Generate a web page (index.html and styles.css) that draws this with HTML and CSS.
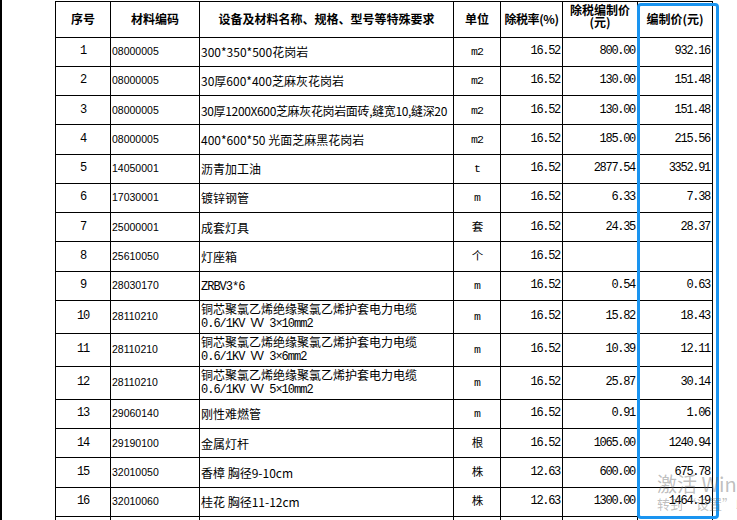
FILE: index.html
```html
<!DOCTYPE html>
<html lang="zh-CN">
<head>
<meta charset="utf-8">
<title>材料价格表</title>
<link rel="stylesheet" href="styles.css">
</head>
<body>
<div class="page">
  <table class="sheet">
    <colgroup>
      <col class="c-no"><col class="c-code"><col class="c-name"><col class="c-unit"><col class="c-rate"><col class="c-net"><col class="c-price">
    </colgroup>
    <thead>
      <tr class="head">
        <th>序号</th>
        <th>材料编码</th>
        <th>设备及材料名称、规格、型号等特殊要求</th>
        <th>单位</th>
        <th class="narrow">除税率(%)</th>
        <th class="two">除税编制价<br>(元)</th>
        <th>编制价(元)</th>
      </tr>
    </thead>
    <tbody>
      <tr><td class="no">1</td><td class="code">08000005</td><td class="name">300*350*500花岗岩</td><td class="unit">m2</td><td class="num">16.52</td><td class="num">800.00</td><td class="num">932.16</td></tr>
      <tr><td class="no">2</td><td class="code">08000005</td><td class="name">30厚600*400芝麻灰花岗岩</td><td class="unit">m2</td><td class="num">16.52</td><td class="num">130.00</td><td class="num">151.48</td></tr>
      <tr><td class="no">3</td><td class="code">08000005</td><td class="name tight">30厚1200X600芝麻灰花岗岩面砖,缝宽10,缝深20</td><td class="unit">m2</td><td class="num">16.52</td><td class="num">130.00</td><td class="num">151.48</td></tr>
      <tr><td class="no">4</td><td class="code">08000005</td><td class="name">400*600*50 光面芝麻黑花岗岩</td><td class="unit">m2</td><td class="num">16.52</td><td class="num">185.00</td><td class="num">215.56</td></tr>
      <tr><td class="no">5</td><td class="code">14050001</td><td class="name">沥青加工油</td><td class="unit">t</td><td class="num">16.52</td><td class="num">2877.54</td><td class="num">3352.91</td></tr>
      <tr><td class="no">6</td><td class="code">17030001</td><td class="name">镀锌钢管</td><td class="unit">m</td><td class="num">16.52</td><td class="num">6.33</td><td class="num">7.38</td></tr>
      <tr><td class="no">7</td><td class="code">25000001</td><td class="name">成套灯具</td><td class="unit">套</td><td class="num">16.52</td><td class="num">24.35</td><td class="num">28.37</td></tr>
      <tr><td class="no">8</td><td class="code">25610050</td><td class="name">灯座箱</td><td class="unit">个</td><td class="num">16.52</td><td class="num"></td><td class="num"></td></tr>
      <tr><td class="no">9</td><td class="code">28030170</td><td class="name"><span class="mono">ZRBV3*6</span></td><td class="unit">m</td><td class="num">16.52</td><td class="num">0.54</td><td class="num">0.63</td></tr>
      <tr class="tall"><td class="no">10</td><td class="code">28110210</td><td class="name">铜芯聚氯乙烯绝缘聚氯乙烯护套电力电缆<br><span class="mono">0.6/1KV VV 3×10mm2</span></td><td class="unit">m</td><td class="num">16.52</td><td class="num">15.82</td><td class="num">18.43</td></tr>
      <tr class="tall"><td class="no">11</td><td class="code">28110210</td><td class="name">铜芯聚氯乙烯绝缘聚氯乙烯护套电力电缆<br><span class="mono">0.6/1KV VV 3×6mm2</span></td><td class="unit">m</td><td class="num">16.52</td><td class="num">10.39</td><td class="num">12.11</td></tr>
      <tr class="tall"><td class="no">12</td><td class="code">28110210</td><td class="name">铜芯聚氯乙烯绝缘聚氯乙烯护套电力电缆<br><span class="mono">0.6/1KV VV 5×10mm2</span></td><td class="unit">m</td><td class="num">16.52</td><td class="num">25.87</td><td class="num">30.14</td></tr>
      <tr><td class="no">13</td><td class="code">29060140</td><td class="name">刚性难燃管</td><td class="unit">m</td><td class="num">16.52</td><td class="num">0.91</td><td class="num">1.06</td></tr>
      <tr><td class="no">14</td><td class="code">29190100</td><td class="name">金属灯杆</td><td class="unit">根</td><td class="num">16.52</td><td class="num">1065.00</td><td class="num">1240.94</td></tr>
      <tr><td class="no">15</td><td class="code">32010050</td><td class="name">香樟 胸径9-10cm</td><td class="unit">株</td><td class="num">12.63</td><td class="num">600.00</td><td class="num">675.78</td></tr>
      <tr><td class="no">16</td><td class="code">32010060</td><td class="name">桂花 胸径11-12cm</td><td class="unit">株</td><td class="num">12.63</td><td class="num">1300.00</td><td class="num">1464.19</td></tr>
      <tr><td class="no"></td><td class="code"></td><td class="name"></td><td class="unit"></td><td class="num"></td><td class="num"></td><td class="num"></td></tr>
    </tbody>
  </table>
  <div class="highlight"></div>
  <div class="watermark">
    <div class="wm-big">激活 Windows</div>
    <div class="wm-small">转到“设置”以激活 Windows。</div>
  </div>
</div>
</body>
</html>
```

FILE: styles.css
```css
html, body {
  margin: 0;
  padding: 0;
  background: #fff;
  overflow: hidden;
}

.page {
  position: relative;
  height: 520px;
  width: 737px;
  overflow: hidden;
  border-left: 2px solid #000;
  box-sizing: border-box;
}

.sheet {
  border-collapse: collapse;
  table-layout: fixed;
  width: 658px;
  margin: 1px 0 0 53px;
  font-family: "Noto Sans CJK SC", sans-serif;
  font-size: 12px;
  color: #000;
}

.c-no { width: 55px; }
.c-code { width: 89px; }
.c-name { width: 254px; }
.c-unit { width: 47px; }
.c-rate { width: 62px; }
.c-net { width: 75px; }
.c-price { width: 75px; }

.sheet th, .sheet td {
  border: 1px solid #000;
  padding: 0;
  overflow: hidden;
  white-space: nowrap;
}

.head th {
  height: 32.5px;
  font-size: 12px;
  font-weight: bold;
  text-align: center;
  vertical-align: middle;
  line-height: 14px;
}

.head th.narrow {
  letter-spacing: -0.4px;
}

.head th.two {
  vertical-align: top;
  line-height: 12px;
  padding-top: 2px;
}

.sheet tbody tr td {
  height: 28.25px;
  vertical-align: middle;
  line-height: 13px;
}

.sheet tbody tr.tall td {
  height: 32px;
}

.no {
  text-align: center;
  font-family: "Liberation Mono", monospace;
  font-size: 12px;
  letter-spacing: -1.2px;
}

.code {
  font-family: "Liberation Sans", sans-serif;
  font-size: 10.5px;
  padding-left: 1px !important;
}

.name {
  padding-left: 1px !important;
}

.name.tight {
  letter-spacing: -0.35px;
}

.mono {
  font-family: "Liberation Mono", "Noto Sans CJK SC", monospace;
  font-size: 12px;
  letter-spacing: -1px;
}

.unit {
  text-align: center;
  font-family: "Liberation Mono", "Noto Sans CJK SC", monospace;
  font-size: 11.5px;
  letter-spacing: -0.8px;
}

.num {
  text-align: right;
  padding-right: 2px !important;
  font-family: "Liberation Mono", monospace;
  font-size: 12px;
  letter-spacing: -1.3px;
}

.highlight {
  position: absolute;
  left: 635px;
  top: 3px;
  width: 82px;
  height: 516px;
  box-sizing: border-box;
  border: 3px solid #1a94f0;
  border-radius: 4px;
}

.watermark {
  position: absolute;
  left: 655px;
  top: 471px;
  color: rgba(100, 100, 100, 0.42);
  font-family: "Noto Sans CJK SC", "Liberation Sans", sans-serif;
  white-space: nowrap;
}

.wm-big {
  font-size: 20px;
  line-height: 25px;
}

.wm-small {
  font-size: 13px;
  line-height: 16px;
}
```
